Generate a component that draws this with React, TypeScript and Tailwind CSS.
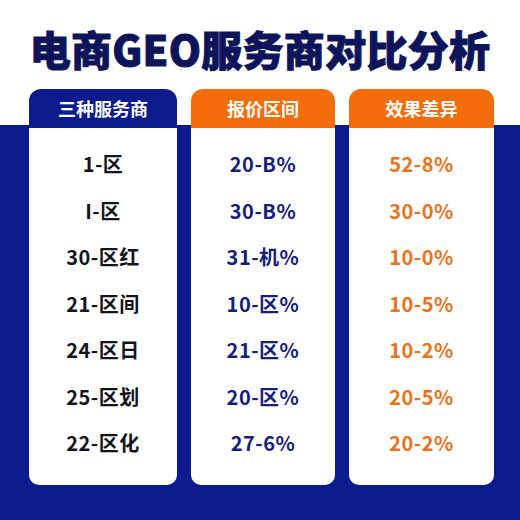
const rows = [
  ["1-区", "20-B%", "52-8%"],
  ["I-区", "30-B%", "30-0%"],
  ["30-区红", "31-机%", "10-0%"],
  ["21-区间", "10-区%", "10-5%"],
  ["24-区日", "21-区%", "10-2%"],
  ["25-区划", "20-区%", "20-5%"],
  ["22-区化", "27-6%", "20-2%"],
];

const columns = [
  { title: "三种服务商", head: "bg-[#0b1b8e]", text: "text-[#12131c]" },
  { title: "报价区间", head: "bg-[#f46d0b]", text: "text-[#15207a]" },
  { title: "效果差异", head: "bg-[#f46d0b]", text: "text-[#ea721c]" },
];

export default function App() {
  return (
    <div
      className="h-[520px] w-[520px] overflow-hidden bg-[linear-gradient(to_bottom,#ffffff_125px,#0b1b8e_125px)]"
      style={{ fontFamily: '"Noto Sans CJK SC", "Noto Sans", sans-serif' }}
    >
      <h1 className="pt-[22px] text-center text-[41px] font-black leading-[52px] tracking-[0.3px] text-[#0d1459] [-webkit-text-stroke:1px_#0d1459]">
        电商GEO服务商对比分析
      </h1>

      <div className="mt-[15px] grid grid-cols-[148px_144px_145px] gap-[14px] pl-[29px]">
        {columns.map((col, ci) => (
          <div key={col.title} className="flex flex-col">
            <div
              className={`flex h-[39px] items-center justify-center rounded-t-[12px] text-[18px] font-bold text-white ${col.head}`}
            >
              {col.title}
            </div>
            <div className="flex h-[357px] flex-col rounded-b-[10px] bg-white pt-[13px]">
              {rows.map((row) => (
                <div
                  key={row[0]}
                  className={`flex h-[46.5px] items-center justify-center text-[20px] font-bold tracking-[0.5px] ${col.text}`}
                >
                  {row[ci]}
                </div>
              ))}
            </div>
          </div>
        ))}
      </div>
    </div>
  );
}
